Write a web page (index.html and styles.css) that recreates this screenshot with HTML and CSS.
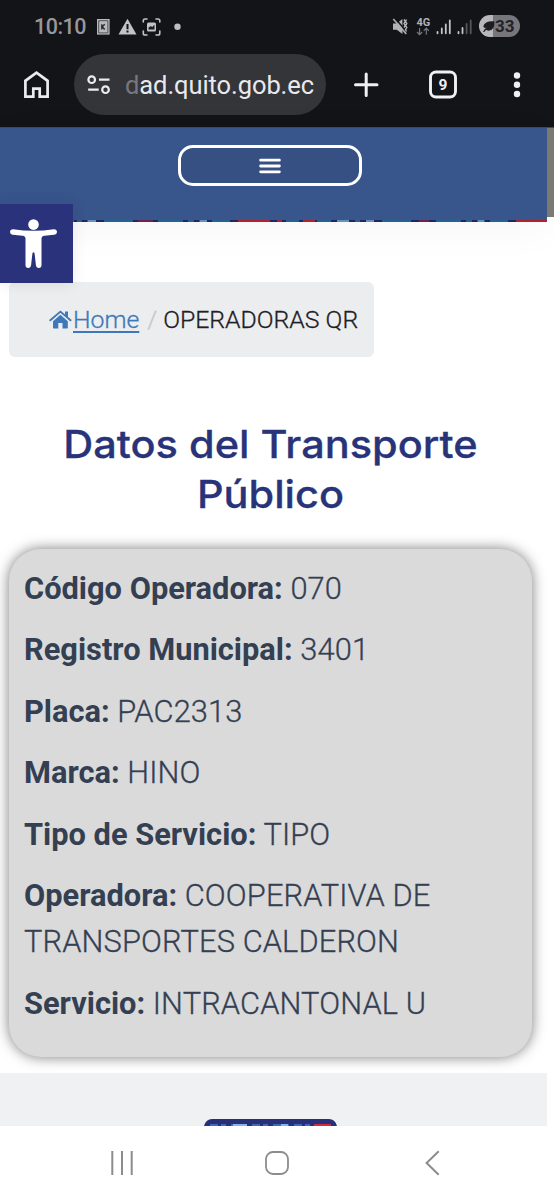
FILE: index.html
```
<!DOCTYPE html>
<html lang="es">
<head>
<meta charset="utf-8">
<title>Operadoras QR</title>
<link rel="stylesheet" href="styles.css">
</head>
<body>
<div class="phone">
  <div class="status">
    <span class="clock">10:10</span>
    <svg class="notices" width="90" height="24" viewBox="94 14 90 24">
      <path fill="#b9b8bc" d="M97 19h12.6v15.600H97z"/>
      <path fill="none" stroke="#38383d" stroke-width=".8" d="M98.700 20.700h9.200v12.200h-9.200z"/>
      <path fill="none" stroke="#222227" stroke-width="1.300" d="M101.800 24.200v5.300M104.700 24.200l-2.500 2.600 2.500 2.700"/>
      <path fill="#c3c2c6" d="M127.500 18.700l9 15.800h-18z"/>
      <path stroke="#131418" stroke-width="2" d="M127.500 24v5.200M127.500 30.600v2"/>
      <g fill="none" stroke="#c3c2c6" stroke-width="1.600" stroke-linecap="round">
        <path d="M143.300 22v-1.300q0-1.700 1.700-1.700h2M156 19h2q1.800 0 1.800 1.700V22M159.800 31v2.200q0 1.800-1.800 1.800h-2M147 35h-2q-1.700 0-1.700-1.800V31"/>
      </g>
      <rect x="147" y="22.500" width="9" height="9" rx="1.500" fill="#c3c2c6"/>
      <path fill="#1c1d21" d="M148.500 29.500v-1.800l2.200-1.700 1.500 1 2.300-2.200v4.700z"/>
      <circle cx="177.500" cy="26.700" r="3.200" fill="#bebdc1"/>
    </svg>
    <svg class="radio" width="84" height="24" viewBox="390 14 84 24">
      <path fill="#b2b1b5" d="M393 23.500h3.800l5.600-4.500v15l-5.600-4.300H393z"/>
      <path stroke="#131418" stroke-width="1.600" d="M394.800 18l12 14"/>
      <path stroke="#b2b1b5" stroke-width="1.600" d="M393.300 19l13 15"/>
      <path fill="none" stroke="#b2b1b5" stroke-width="1.400" d="M404 19.500l1.300 2-1.300 2 1.300 2-1.300 2M406.500 19.500l-1 2 1.300 2-1.300 2 1.300 2-1.300 2 1 2"/>
      <text class="net" x="416.400" y="25.800">4G</text>
      <path fill="none" stroke="#77767b" stroke-width="1.200" d="M419.600 28v6.500M417 32l2.600 2.600 2.600-2.600M426.300 34.700v-6.500M423.700 30.800l2.600-2.600 2.600 2.600"/>
      <path stroke="#c3c2c6" stroke-width="1.800" stroke-linecap="round" d="M437.500 32v1.300M441.800 28.500v4.800M445.800 24.500v8.800M449.800 20.500v12.800M458.500 32v1.300M462.500 28v5.300"/>
      <path stroke="#56565b" stroke-width="1.800" stroke-linecap="round" d="M466.600 24v9.300M470.700 20.500v12.800"/>
    </svg>
    <div class="battery">
      <svg width="14" height="22" viewBox="0 0 14 22"><path fill="#1d1e22" d="M2 16.800q1.500-2.700 3.500-4.300-2.500 1.200-3.200-1.200Q4 5.600 13.200 6.300q1 8.200-4.700 9.300-1.800.2-3.300-.8l-2 2.200z"/></svg>
      <span>33</span>
    </div>
  </div>

  <div class="toolbar">
    <svg class="home" width="26" height="28" viewBox="0 0 26 28"><path fill="none" stroke="#ececf0" stroke-width="2.700" d="M1.400 9.800v15.900h7.900v-8h6.400v8h7.900V9.800L12.500 1.700z"/></svg>
    <div class="url">
      <svg width="24" height="20" viewBox="0 0 24 20"><g fill="none" stroke="#ececf0" stroke-width="2.200"><circle cx="4.700" cy="4.700" r="3.300"/><circle cx="18.500" cy="14.700" r="3.300"/><path d="M12 4.700h10.500M1.200 14.700h10.500"/></g></svg>
      <span class="address"><span class="cut">d</span>ad.quito.gob.ec</span>
    </div>
    <svg class="controls" width="172" height="30" viewBox="352 70 172 30">
      <path stroke="#f0f0f3" stroke-width="3" stroke-linecap="round" d="M355.500 84.700h21.500M366.200 74v21.500"/>
      <rect x="430.500" y="72" width="25" height="25" rx="5.500" fill="none" stroke="#f0f0f3" stroke-width="2.900"/>
      <text class="tabs" x="443" y="90.200" text-anchor="middle">9</text>
      <g fill="#f0f0f3"><circle cx="517" cy="75.500" r="3.200"/><circle cx="517" cy="84.700" r="3.200"/><circle cx="517" cy="94" r="3.200"/></g>
    </svg>
  </div>

  <div class="page">
    <header class="masthead">
      <button class="menu" aria-label="Menu"><svg width="22" height="16" viewBox="0 0 22 16"><path stroke="#fff" stroke-width="2.800" stroke-linecap="round" d="M1.600 2.200h18.800M1.600 8h18.800M1.600 13.800h18.800"/></svg></button>
      <svg class="band" width="547" height="2" viewBox="0 0 547 2">
        <path fill="#246195" d="M0 0h547v2H0z"/>
        <path fill="#20275e" d="M74 0h3v2h-3zM82 0h5v2h-5zM96 0h8v2h-8zM133 0h25v2h-25zM183 0h5v2h-5zM194 0h5v2h-5zM207 0h5v2h-5zM230 0h56v2h-56zM299 0h18v2h-18zM331 0h24v2h-24zM360 0h22v2h-22zM411 0h25v2h-25zM461 0h5v2h-5zM472 0h5v2h-5zM485 0h5v2h-5zM508 0h8v2h-8z"/>
        <path fill="#b0222e" d="M238 0h32v2h-32zM277 0h5v2h-5zM303 0h12v2h-12zM516 0h31v2h-31z"/>
        <path fill="#6493b7" d="M88 0h8v2h-8zM200 0h7v2h-7zM337 0h12v2h-12zM366 0h8v2h-8zM478 0h6v2h-6z"/>
        <path fill="#6d234d" d="M138 0h15v2h-15zM419 0h10v2h-10z"/>
      </svg>
      <div class="gutter"></div>
    </header>
    <div class="access">
      <svg width="48" height="50" viewBox="0 0 48 50"><circle cx="23.500" cy="5.600" r="5.300" fill="#fff"/><path fill="#fff" d="M3.200 10.300q10 1.500 20.300 1.500t20.300-1.500q3-.1 3.200 2.700-.1 2.600-2.700 2.800l-10 1q-2.800.4-2.800 3V46q0 3-2.700 3-2.500 0-2.900-3l-1.300-11.500q-1.100-2.700-2.200 0L21.100 46q-.4 3-2.900 3-2.700 0-2.700-3V19.800q0-2.600-2.800-3l-10-1Q.1 15.600 0 13q.2-2.800 3.200-2.700z"/></svg>
    </div>
    <nav class="crumbs">
      <svg width="23" height="20" viewBox="0 0 23 20"><path fill="#3f78b9" d="M4 11.200l7.400-6.500 7.400 6.500v6.600q0 .7-.7.700h-4.600v-5.600H9.300v5.600H4.700q-.7 0-.7-.7z"/><path fill="none" stroke="#3f78b9" stroke-width="1.900" stroke-linecap="round" stroke-linejoin="round" d="M1.300 10.300l10.100-8.700 10.100 8.700"/><path fill="#3f78b9" d="M16 1.500h3v6l-3-2.500z"/></svg>
      <a>Home</a><span class="slash">/</span><span class="here">OPERADORAS QR</span>
    </nav>
    <h1>Datos del Transporte<br>Público</h1>
    <section class="card">
      <p><b>Código Operadora:</b> 070</p>
      <p><b>Registro Municipal:</b> 3401</p>
      <p><b>Placa:</b> PAC2313</p>
      <p><b>Marca:</b> HINO</p>
      <p><b>Tipo de Servicio:</b> TIPO</p>
      <p><b>Operadora:</b> COOPERATIVA DE<br>TRANSPORTES CALDERON</p>
      <p><b>Servicio:</b> INTRACANTONAL U</p>
    </section>
    <footer class="foot">
      <svg width="133" height="7" viewBox="0 0 133 7"><path fill="#28307a" d="M0 7Q2 0 8 0h117q6 0 8 7z"/><path stroke="#4169b9" stroke-width="2" stroke-dasharray="8 3 5 5" d="M6 6h105"/><path stroke="#82b4ed" stroke-width="2" d="M29 6h14M77 6h7"/><path stroke="#cf2d3e" stroke-width="2" d="M110 6h17"/></svg>
    </footer>
  </div>

  <div class="navbar">
    <svg width="24" height="24" viewBox="0 0 24 24"><path stroke="#8c8c8c" stroke-width="2" d="M1.300 0v24M11 0v24M20.700 0v24"/></svg>
    <svg width="24" height="24" viewBox="0 0 24 24"><rect x="1" y="1" width="22" height="22" rx="7" fill="none" stroke="#8c8c8c" stroke-width="1.800"/></svg>
    <svg width="15" height="26" viewBox="0 0 15 26"><path fill="none" stroke="#8c8c8c" stroke-width="2" d="M13.700 1.200L1.600 13l12.100 11.800"/></svg>
  </div>
</div>
</body>
</html>
```

FILE: styles.css
```
* { box-sizing: border-box; }
body { margin: 0; background: #fff; font-family: Roboto, "Liberation Sans", sans-serif; }
svg { display: block; flex: none; }
.phone { width: 554px; height: 1200px; overflow: hidden; display: flex; flex-direction: column; }
.status { height: 52px; flex: none; background: #131418; display: flex; align-items: center; padding: 0 34px; }
.clock { width: 61px; font-size: 21.500px; font-weight: 500; letter-spacing: -.5px; color: #98979c; white-space: nowrap; }
.radio { margin-left: 206px; }
.net { font-size: 11px; font-weight: 700; fill: #b2b1b5; }
.battery { width: 41px; height: 22px; margin-left: 5px; border-radius: 11px; background: linear-gradient(90deg, #b8b8bb 14px, #77777b 14px); display: flex; align-items: center; flex: none; padding-left: 2px; }
.battery span { font-size: 17px; font-weight: 700; color: #222328; }
.toolbar { height: 76px; flex: none; background: #131418; border-bottom: 1px solid #3b4a67; display: flex; align-items: flex-start; padding: 2px 0 0 24px; }
.home { margin-top: 17px; }
.url { width: 252px; height: 61px; margin-left: 24px; border-radius: 31px; background: #343539; display: flex; align-items: center; padding-left: 13px; }
.address { margin-left: 14px; font-size: 25.500px; letter-spacing: -.08px; color: #e9e9ed; white-space: nowrap; }
.cut { color: #77777c; }
.controls { margin: 16px 0 0 26px; }
.tabs { font-size: 15.500px; font-weight: 700; fill: #f0f0f3; }
.page { height: 998px; flex: none; position: relative; }
.masthead { width: 547px; height: 94px; background: #38558c; padding-top: 17px; position: relative; box-shadow: 0 8px 42px rgba(0, 0, 0, .04); display: flex; flex-direction: column; align-items: center; justify-content: space-between; }
.menu { width: 184px; height: 41px; margin-right: 7px; border: 3px solid #fff; border-radius: 15px; background: #365083; display: grid; place-items: center; padding: 0; }
.gutter { position: absolute; left: 547px; top: 0; width: 7px; height: 89px; background: #7b7974; }
.access { position: absolute; left: 0; top: 76px; width: 73px; height: 79px; background: #29327b; padding: 15px 0 0 10px; box-shadow: 0 0 14px rgba(0, 0, 0, .09); }
.crumbs { width: 365px; height: 75px; margin: 60px 0 0 9px; border-radius: 6px; background: #ecedef; display: flex; align-items: center; padding: 0 0 0 40px; font-size: 24.800px; font-weight: 300; white-space: nowrap; -webkit-text-stroke: .3px; }
.crumbs a { margin-left: 1px; color: #3f78b9; text-decoration: underline; text-decoration-thickness: 1.500px; text-underline-offset: 3px; }
.slash { margin-left: 8px; color: #c5c7c9; }
.here { margin-left: 6px; color: #1f2124; }
h1 { width: 541px; margin: 62px 0 30px; color: #29337a; font: 500 38.500px/50px Inter, sans-serif; -webkit-text-stroke: .3px; text-align: center; transform: scaleX(1.078); }
.card { width: 523px; height: 508px; margin-left: 9px; border-radius: 32px; background: #dadada; padding: 16.500px 15px; box-shadow: 0 0 14px rgba(0, 0, 0, .52); color: #344052; font-size: 30.800px; line-height: 46.200px; font-weight: 300; letter-spacing: .12px; white-space: nowrap; -webkit-text-stroke: .3px; }
.card p { margin: 0 0 15.300px; }
.card b { font-weight: 700; letter-spacing: 0; -webkit-text-stroke: 0; }
.foot { width: 547px; height: 53px; margin-top: 16px; background: #f0f1f3; display: flex; align-items: flex-end; padding-left: 204px; }
.navbar { flex: 1; background: #fff; display: grid; grid-template-columns: 24px 24px 15px; column-gap: 130px; padding-left: 111px; align-items: center; }
.navbar svg:last-child { margin-left: 6px; }
```
